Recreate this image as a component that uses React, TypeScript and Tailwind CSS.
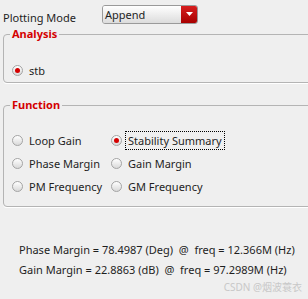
import React from "react";

const FONT = { fontFamily: '"Noto Sans", "Open Sans", "Noto Sans CJK SC", sans-serif' };

function Radio({ checked, label, focused }: { checked?: boolean; label: string; focused?: boolean }) {
  return (
    <div className="flex items-center h-[20px]">
      <span className="relative w-[11px] h-[11px] rounded-full border border-[#a4a4a4] bg-gradient-to-b from-[#ffffff] to-[#d9d9d9] shrink-0 flex items-center justify-center">
        {checked && <span className="w-[5px] h-[5px] rounded-full bg-[#d40000]" />}
      </span>
      <span
        className={
          "ml-[4px] px-[2px] leading-[17px] text-[11px] text-[#1e1e1e] " +
          (focused ? "outline outline-1 outline-dotted outline-black outline-offset-0" : "")
        }
      >
        {label}
      </span>
    </div>
  );
}

function Group({ title, children, className }: { title: string; children: React.ReactNode; className?: string }) {
  return (
    <fieldset
      className={
        "border border-[#b4b4b4] rounded-[4px] ml-[3px] mr-[-10px] pl-[8px] shadow-[0_1px_0_#ffffff] " + (className ?? "")
      }
    >
      <legend className="ml-[-2px] px-[2px] text-[11px] font-bold text-[#d40000] leading-[14px]">{title}</legend>
      {children}
    </fieldset>
  );
}

export default function App() {
  return (
    <div className="w-[308px] h-[299px] bg-[#efefef] overflow-hidden relative" style={FONT}>
      <div className="flex items-center h-[27px] pt-[1px]">
        <span className="ml-[3px] mt-[8px] text-[11px] text-[#1e1e1e] w-[99px]">Plotting Mode</span>
        <div className="flex h-[19px] w-[96px] rounded-[3px] border border-[#9a9a9a] overflow-hidden">
          <div className="flex-1 bg-gradient-to-b from-[#ffffff] to-[#dcdcdc] text-[11px] leading-[17px] pl-[2px] text-[#1e1e1e]">
            Append
          </div>
          <div className="w-[16px] bg-gradient-to-b from-[#d71d1d] to-[#a80000] flex items-center justify-center">
            <svg width="7" height="4" viewBox="0 0 7 4">
              <path d="M0 0 H7 L3.5 4 Z" fill="#ffffff" />
            </svg>
          </div>
        </div>
      </div>

      <Group title="Analysis" className="mt-[0px] h-[56px]">
        <div className="pt-[19px]">
          <Radio checked label="stb" />
        </div>
      </Group>

      <Group title="Function" className="mt-[15px] h-[109px]">
        <div className="pt-[18px] flex">
          <div className="flex flex-col gap-[3px] w-[99px]">
            <Radio label="Loop Gain" />
            <Radio label="Phase Margin" />
            <Radio label="PM Frequency" />
          </div>
          <div className="flex flex-col gap-[3px]">
            <Radio checked focused label="Stability Summary" />
            <Radio label="Gain Margin" />
            <Radio label="GM Frequency" />
          </div>
        </div>
      </Group>

      <div className="mt-[33px] pl-[19px] text-[11px] text-[#1e1e1e] leading-[20px] whitespace-pre">
        <div>Phase Margin = 78.4987 (Deg)  @  freq = 12.366M (Hz)</div>
        <div>Gain Margin = 22.8863 (dB)  @  freq = 97.2989M (Hz)</div>
      </div>
      <div className="absolute right-[6px] bottom-[4px] text-[10px] text-[#c8c8c8]">CSDN @烟波蓑衣</div>
    </div>
  );
}
